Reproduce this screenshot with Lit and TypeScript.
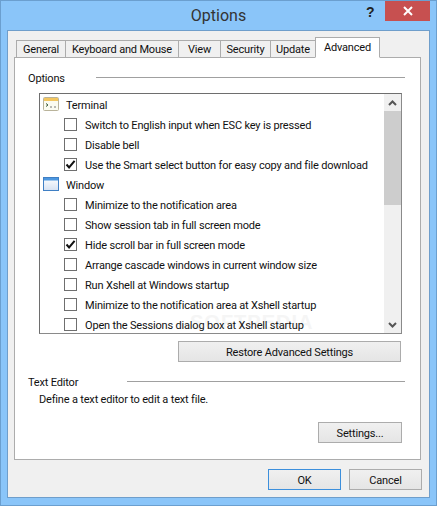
import { LitElement, html, css, svg } from "lit";
import { customElement } from "lit/decorators.js";

const termIcon = html`<svg class="ico" width="16" height="14" viewBox="0 0 16 14">
  <rect x="0.5" y="0.5" width="15" height="13" rx="1" fill="#fbfbf0" stroke="#b9b39a"/>
  <rect x="1" y="1" width="14" height="3" fill="#f3c65f"/>
  <path d="M3 6.5l2 1.5-2 1.5" fill="none" stroke="#3a5a3a" stroke-width="1"/>
  <path d="M7 10h2M11 10h2" stroke="#777" stroke-width="1"/>
</svg>`;
const winIcon = html`<svg class="ico" width="16" height="14" viewBox="0 0 16 14">
  <defs><linearGradient id="wg" x1="0" y1="0" x2="0" y2="1"><stop offset="0" stop-color="#fff"/><stop offset="1" stop-color="#d5e1f2"/></linearGradient></defs>
  <rect x="0.5" y="0.5" width="15" height="13" fill="url(#wg)" stroke="#3f7fc4"/>
  <rect x="1" y="1" width="14" height="2.5" fill="#4c97e0"/>
</svg>`;
const check = svg`<svg width="11" height="11" viewBox="0 0 11 11"><path d="M1.5 5.5l2.6 3L9.6 1.8" fill="none" stroke="#111" stroke-width="2"/></svg>`;

const terminal: [string, boolean][] = [
  ["Switch to English input when ESC key is pressed", false],
  ["Disable bell", false],
  ["Use the Smart select button for easy copy and file download", true],
];
const windowRows: [string, boolean][] = [
  ["Minimize to the notification area", false],
  ["Show session tab in full screen mode", false],
  ["Hide scroll bar in full screen mode", true],
  ["Arrange cascade windows in current window size", false],
  ["Run Xshell at Windows startup", false],
  ["Minimize to the notification area at Xshell startup", false],
  ["Open the Sessions dialog box at Xshell startup", false],
];
const tabs = ["General", "Keyboard and Mouse", "View", "Security", "Update", "Advanced"];

@customElement("app-root")
export class AppRoot extends LitElement {
  static styles = css`
    :host { display: block; width: 437px; height: 506px; overflow: hidden; font-family: Roboto, "Open Sans", sans-serif; font-size: 11px; letter-spacing: -0.18px; color: #111; }
    * { box-sizing: border-box; }
    .win { width: 437px; height: 506px; background: #8ac5f9; border: 1px solid #6b9fcf; display: flex; flex-direction: column; padding: 0 6px 7px 6px; position: relative; }
    .titlebar { height: 29px; display: flex; align-items: center; justify-content: center; font-size: 16px; letter-spacing: 0; color: #333; flex: none; }
    .help { position: absolute; left: 365px; top: 3px; font: bold 14px "Liberation Sans", sans-serif; color: #222; }
    .close { position: absolute; left: 384px; top: 0; width: 45px; height: 20px; background: #c75050; display: flex; align-items: center; justify-content: center; }
    .client { flex: 1; background: #f0f0f0; border: 1px solid #6f9ecb; padding: 7px 8px 7px 6px; display: flex; flex-direction: column; }
    .tabs { display: flex; padding-left: 2px; height: 20px; align-items: flex-end; position: relative; z-index: 1; margin-bottom: -1px; flex: none; }
    .tab { height: 18px; border: 1px solid #acacac; margin-right: -1px; padding-top: 1px; background: #f0f0f0; display: flex; align-items: center; justify-content: center; white-space: nowrap; line-height: 1; }
    .tab.on { height: 21px; background: #fff; border-bottom-color: #fff; padding-top: 0; position: relative; }
    .panel { background: #fff; border: 1px solid #acacac; height: 403px; flex: none; display: flex; flex-direction: column; padding: 10px 15px 0 13px; }
    .sec { display: flex; align-items: center; height: 18px; flex: none; }
    .sec > span:first-child { padding-top: 2px; }
    .sec .line { flex: 1; height: 1px; background: #a0a0a0; }
    .list { margin: 7px 3px 0 11px; height: 241px; flex: none; border: 1px solid #7a7a7a; border-color: #6e6e6e #8a8a8a #8a8a8a #6e6e6e; display: flex; overflow: hidden; position: relative; }
    .items { flex: 1; min-width: 0; position: relative; }
    .row { height: 20px; display: flex; align-items: center; white-space: nowrap; position: relative; }
    .row > span:last-child { padding-top: 2px; }
    .row.head { padding-left: 3px; }
    .ico { flex: none; margin-right: 7px; }
    .row.item { padding-left: 24px; }
    .box { width: 13px; height: 13px; border: 1px solid #6f6f6f; background: #fff; margin-right: 8px; flex: none; display: flex; align-items: center; justify-content: center; }
    .sb { width: 17px; background: #f0f0f0; flex: none; display: flex; flex-direction: column; }
    .sb .arr { height: 17px; display: flex; align-items: center; justify-content: center; flex: none; }
    .thumb { height: 94px; background: #cdcdcd; flex: none; }
    .sp { flex: 1; }
    .btnrow { display: flex; justify-content: flex-end; }
    .btn { border: 1px solid #acacac; background: linear-gradient(#f0f0f0, #e5e5e5); display: flex; align-items: center; justify-content: center; padding-top: 1px; }
    .restore { width: 223px; height: 21px; margin-top: 7px; margin-right: 4px; }
    .desc { padding: 2px 0 0 11px; height: 16px; line-height: 16px; }
    .settings { width: 84px; height: 21px; margin-top: 16px; margin-right: 3px; }
    .foot { display: flex; justify-content: flex-end; gap: 8px; margin-top: 9px; margin-right: -1px; flex: none; }
    .foot .btn { width: 73px; height: 21px; }
    .foot .ok { border-color: #3c8fdc; }
    .wm { position: absolute; left: 150px; top: 218px; font: bold 20px/1 "Liberation Sans", sans-serif; letter-spacing: 1px; color: #f5f5f5; white-space: nowrap; }
  `;

  private item(t: [string, boolean]) {
    return html`<div class="row item"><span class="box">${t[1] ? check : ""}</span><span>${t[0]}</span></div>`;
  }

  render() {
    const widths = [50, 114, 43, 51, 46, 65];
    return html`<div class="win">
      <div class="titlebar">Options</div>
      <div class="help">?</div>
      <div class="close"><svg width="10" height="10" viewBox="0 0 10 10"><path d="M1 1l8 8M9 1l-8 8" stroke="#fff" stroke-width="2"/></svg></div>
      <div class="client">
        <div class="tabs">
          ${tabs.map((t, i) => html`<div class="tab ${i === 5 ? "on" : ""}" style="width:${widths[i]}px">${t}</div>`)}
        </div>
        <div class="panel">
          <div class="sec"><span style="width:68px">Options</span><span class="line"></span></div>
          <div class="list">
            <div class="items">
              <div class="wm">SOFTPEDIA</div>
              <div class="row head">${termIcon}<span>Terminal</span></div>
              ${terminal.map((t) => this.item(t))}
              <div class="row head">${winIcon}<span>Window</span></div>
              ${windowRows.map((t) => this.item(t))}
            </div>
            <div class="sb">
              <div class="arr"><svg width="9" height="6" viewBox="0 0 9 6"><path d="M1 5l3.5-3.5L8 5" fill="none" stroke="#555" stroke-width="2"/></svg></div>
              <div class="thumb"></div>
              <div class="sp"></div>
              <div class="arr"><svg width="9" height="6" viewBox="0 0 9 6"><path d="M1 1l3.5 3.5L8 1" fill="none" stroke="#555" stroke-width="2"/></svg></div>
            </div>
          </div>
          <div class="btnrow"><div class="btn restore">Restore Advanced Settings</div></div>
          <div class="sec" style="margin-top:10px"><span style="width:99px">Text Editor</span><span class="line"></span></div>
          <div class="desc">Define a text editor to edit a text file.</div>
          <div class="btnrow"><div class="btn settings">Settings...</div></div>
        </div>
        <div class="foot"><div class="btn ok">OK</div><div class="btn">Cancel</div></div>
      </div>
    </div>`;
  }
}
